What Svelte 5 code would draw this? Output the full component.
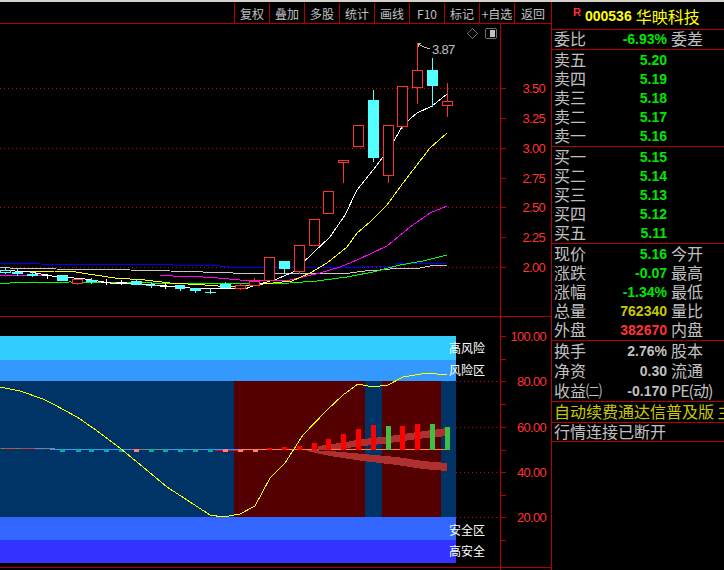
<script>
  const dots = [88, 148, 207, 267];
  const ticks = [88, 118, 148, 178, 207, 237, 267];
  const priceLabels = [[88,'3.50'],[118,'3.25'],[148,'3.00'],[178,'2.75'],[207,'2.50'],[237,'2.25'],[267,'2.00']];

  // x, width, bodyTop, bodyBottom, wickTop, wickBottom, colour kind
  const candles = [
    [0,11,270,272,267,274,'c'],[12,11,272,273,269,276,'c'],[27,11,274,275,272,277,'c'],[42,10,275,275,274,279,'w'],
    [57,11,275,281,275,281,'f'],[72,11,279,283,279,285,'r'],[86,11,280,282,278,284,'f'],[101,10,282,282,279,285,'w'],
    [116,11,282,282,280,285,'w'],[131,11,281,285,279,285,'f'],[146,11,285,285,282,288,'c'],[160,10,286,286,283,289,'w'],
    [175,10,285,289,285,291,'f'],[190,11,288,291,288,293,'f'],[205,11,292,292,288,294,'c'],[220,11,284,288,282,288,'f'],
    [235,11,285,288,283,290,'r'],[249,11,281,285,278,285,'r'],[264,11,257,280,257,280,'r'],[279,11,261,269,261,273,'f'],
    [294,11,245,271,245,274,'r'],[309,11,219,245,219,245,'r'],[323,11,191,213,191,213,'r'],[338,11,160,162,160,183,'r'],
    [353,11,125,146,125,146,'r'],[368,11,100,158,90,162,'f'],[383,11,125,175,125,183,'r'],[397,11,86,126,86,129,'r'],
    [412,11,70,87,43,104,'r'],[427,11,70,86,58,107,'f'],[442,11,101,105,83,117,'r']
  ];

  const pts = (a) => a.map((p) => p.join(',')).join(' ');
  const lines = [
    ['#0000ff', [[0,263],[40,264],[173,265],[220,266],[230,267],[363,267],[364,266],[395,266],[396,264],[447,263]]],
    ['#c8c8c8', [[0,267],[10,268],[55,268],[56,269],[130,270],[170,271],[203,272],[233,273],[350,273],[365,271],[380,270],[400,268],[420,268],[430,266],[447,265]]],
    ['#ff00ff', [[0,276],[50,275],[160,275],[173,276],[203,277],[218,278],[240,280],[290,280],[320,273],[340,267],[357,260],[387,246],[410,227],[430,213],[447,206]]],
    ['#00ff00', [[0,283],[10,283],[70,282],[230,284],[290,283],[317,281],[347,277],[373,272],[400,265],[423,261],[447,255]]],
    ['#ffff00', [[20,272],[55,271],[70,271],[88,274],[115,278],[145,280],[170,283],[205,285],[230,287],[263,284],[292,281],[310,273],[327,263],[347,247],[357,233],[370,222],[387,205],[403,183],[430,148],[447,133]]],
    ['#ffffff', [[0,270],[30,272],[52,276],[85,279],[110,283],[155,285],[190,288],[245,289],[250,287],[277,279],[293,272],[313,253],[330,237],[345,215],[357,190],[373,170],[390,148],[403,125],[417,113],[432,106],[447,94]]]
  ];

  const lowerDots = [381, 427, 472, 517];
  const lowerTicks = [336, 359, 381, 404, 427, 450, 472, 495, 517, 540];
  const lowerLabels = [[336,'100.00'],[381,'80.00'],[427,'60.00'],[472,'40.00'],[517,'20.00']];
  const zones = [
    [0,234,'#003366'],[234,131,'#550000'],[365,17,'#003366'],[382,59,'#550000'],[441,15,'#003366']
  ];
  const bands = [[336,24,'#33ccff'],[360,21,'#3399ff'],[517,23,'#3366ff'],[540,23,'#3333ff']];
  const zoneText = [[348,'高风险'],[370,'风险区'],[530,'安全区'],[551,'高安全']];
  const bars = [
    [267,448,'#ff0000'],[282,447,'#ff0000'],[297,446,'#ff0000'],[312,443,'#ff0000'],[326,439,'#ff0000'],[341,434,'#ff0000'],
    [356,429,'#ff0000'],[371,425,'#ff0000'],[386,426,'#40c040'],[400,426,'#ff0000'],[415,424,'#ff0000'],[430,424,'#40c040'],[445,427,'#40c040']
  ];
  const teal = [62,78,91,106,121,151,165,180,195,210];
  const pink = [136,225,240,255];
  // x, width, y, colour: short pieces of the flat signal line on the left
  const flat = [
    [0,1,448,'#ff0000'],[1,4,448,'#40a040'],[5,10,448,'#d04040'],[15,5,448,'#40a040'],[20,15,448,'#c04040'],[35,20,448,'#808080'],
    [35,10,449,'#0040a0'],[130,40,449,'#808080'],[190,12,449,'#808080'],[215,30,450,'#ff0000'],[245,15,449,'#ff0000']
  ];
  const osc = [[0,387],[20,391],[43,399],[53,404],[77,417],[93,428],[120,448],[143,467],[167,487],[187,500],[210,515],[223,517],[240,514],[255,506],[270,478],[285,463],[303,435],[327,410],[343,395],[358,384],[373,387],[388,385],[403,377],[427,373],[447,375]];
  const bandUp = [[318,446],[340,443],[363,439],[390,436],[417,432],[447,428],[447,436],[417,439],[390,443],[363,446],[340,449],[318,450]];
  const bandDown = [[307,450],[330,451],[363,454],[397,457],[423,461],[447,463],[447,471],[423,469],[397,465],[363,461],[330,456],[307,451]];

  const tools = ['复权','叠加','多股','统计','画线','F10','标记','+自选','返回'];

  const quote = [
    { rows: [['委比','-6.93%','委差','green']], cls: 'flush' },
    { rows: [['卖五','5.20','','green'],['卖四','5.19','','green'],['卖三','5.18','','green'],['卖二','5.17','','green'],['卖一','5.16','','green']], cls: 'pad' },
    { rows: [['买一','5.15','','green'],['买二','5.14','','green'],['买三','5.13','','green'],['买四','5.12','','green'],['买五','5.11','','green']], cls: 'pad' },
    { rows: [['现价','5.16','今开','green'],['涨跌','-0.07','最高','green'],['涨幅','-1.34%','最低','green'],['总量','762340','量比','yellow'],['外盘','382670','内盘','red']], cls: 'pad' },
    { rows: [['换手','2.76%','股本','grey'],['净资','0.30','流通','grey'],['收益㈡','-0.170','PE(动)','grey']], cls: 'tall' }
  ];
</script>

<div class="app">
  <section class="charts">
    <nav class="toolbar">
      {#each tools as t}
        <button class="tool">{t}</button>
      {/each}
    </nav>

    <svg class="price" viewBox="0 24 551 293" width="551" height="293" shape-rendering="crispEdges">
      {#each dots as y}
        <line x1="0" x2="500" y1={y + 0.5} y2={y + 0.5} class="dot" />
      {/each}
      <line x1="500.5" x2="500.5" y1="24" y2="317" class="axis" />
      {#each ticks as y}
        <line x1="500" x2="506" y1={y + 0.5} y2={y + 0.5} class="axis" />
      {/each}
      {#each priceLabels as [y, t]}
        <text x="545" y={y + 5} class="scale">{t}</text>
      {/each}
      {#each lines as [c, p]}
        <polyline points={pts(p)} fill="none" stroke={c} stroke-width="1" />
      {/each}
      {#each candles as [x, w, t, b, wt, wb, k]}
        {@const col = k === 'r' ? '#ff3232' : k === 'w' ? '#ffffff' : '#54ffff'}
        <line x1={x + Math.floor(w / 2) + 0.5} x2={x + Math.floor(w / 2) + 0.5} y1={wt} y2={wb} stroke={col} />
        {#if k === 'f'}
          <rect x={x} y={t} width={w} height={b - t} fill={col} />
        {:else if t === b}
          <line x1={x} x2={x + w} y1={t + 0.5} y2={t + 0.5} stroke={col} />
        {:else}
          <rect x={x + 0.5} y={t + 0.5} width={w - 1} height={b - t} fill="#000" stroke={col} />
        {/if}
      {/each}
      <polyline points="430,49 424,47 418,44 421,43" fill="none" stroke="#c0c0c0" />
      <line x1="418.5" x2="418.5" y1="44" y2="47" stroke="#c0c0c0" />
      <text x="432" y="54" class="peak">3.87</text>
      <path d="M472.5 28.5 L477.5 33.5 L472.5 38.5 L467.5 33.5 Z" fill="none" stroke="#707070" />
      <rect x="485.5" y="28.5" width="11" height="10" rx="2" fill="none" stroke="#707070" />
      <rect x="490" y="30" width="5" height="7" fill="#c0c0c0" />
      <line x1="0" x2="551" y1="316.5" y2="316.5" class="axis" />
    </svg>

    <svg class="lower" viewBox="0 317 551 253" width="551" height="253" shape-rendering="crispEdges">
      {#each lowerDots as y}
        <line x1="456" x2="500" y1={y + 0.5} y2={y + 0.5} class="dot" />
      {/each}
      {#each zones as [x, w, c]}
        <rect x={x} y="381" width={w} height="136" fill={c} />
      {/each}
      {#each bands as [y, h, c]}
        <rect x="0" y={y} width="456" height={h} fill={c} />
      {/each}
      <line x1="50" x2="260" y1="449.5" y2="449.5" stroke="#3399ff" />
      {#each flat as [x, w, y, c]}
        <rect x={x} y={y} width={w} height="1" fill={c} />
      {/each}
      <line x1="240" x2="445" y1="449.5" y2="449.5" stroke="#ff8040" />
      {#each teal as x}
        <rect x={x - 2} y="449" width="5" height="3" fill="#00b0b0" />
      {/each}
      {#each pink as x}
        <rect x={x - 2} y="449" width="5" height="3" fill="#ff8080" />
      {/each}
      <polygon points={pts(bandUp)} fill="#b03030" />
      <polygon points={pts(bandDown)} fill="#b03030" />
      {#each bars as [x, t, c]}
        <rect x={x} y={t} width="5" height={450 - t} fill={c} />
      {/each}
      <polyline points={pts(osc)} fill="none" stroke="#ffff00" />
      {#each zoneText as [y, t]}
        <text x="449" y={y + 5} class="zone">{t}</text>
      {/each}
      <line x1="500.5" x2="500.5" y1="317" y2="570" class="axis" />
      {#each lowerTicks as y}
        <line x1="500" x2="506" y1={y + 0.5} y2={y + 0.5} class="axis" />
      {/each}
      {#each lowerLabels as [y, t]}
        <text x="546" y={y + 5} class="scale">{t}</text>
      {/each}
      <line x1="0" x2="551" y1="567.5" y2="567.5" class="axis" />
    </svg>
  </section>

  <aside class="panel">
    <header class="title">
      <span class="r">R</span><b class="code">000536</b><span class="name">华映科技</span>
    </header>
    {#each quote as group}
      <div class="group {group.cls}">
        {#each group.rows as [a, v, b, tone]}
          <div class="row">
            <span class="label">{a}</span>
            <b class="value {tone}">{v}</b>
            <span class="label side" class:pe={b.startsWith('PE')}>{b}</span>
          </div>
        {/each}
      </div>
    {/each}
    <div class="line notice">自动续费通达信普及版 主</div>
    <div class="line status">行情连接已断开</div>
  </aside>
</div>

<style>
  :global(body) {
    margin: 0;
    background: #000;
  }
  .app {
    width: 724px;
    height: 570px;
    display: flex;
    overflow: hidden;
    background: #000;
    border-top: 2px solid #d4d0c8;
    box-sizing: border-box;
    font-family: "Liberation Sans", "Noto Sans CJK SC", sans-serif;
  }
  .charts {
    width: 551px;
    flex: none;
    display: flex;
    flex-direction: column;
  }
  .toolbar {
    height: 22px;
    flex: none;
    padding-top: 1px;
    box-sizing: border-box;
    display: flex;
    justify-content: flex-end;
    border-bottom: 1px solid #b40000;
  }
  .tool {
    width: 35px;
    padding: 0;
    background: none;
    border: 0;
    border-left: 1px solid #b40000;
    color: #c0c0c0;
    font: 12px "Noto Sans CJK SC", sans-serif;
    box-sizing: border-box;
    white-space: nowrap;
  }
  .tool:last-child {
    width: 37px;
  }
  svg {
    display: block;
    flex: none;
  }
  .dot {
    stroke: #e00000;
    stroke-dasharray: 1 3;
  }
  .axis {
    stroke: #b40000;
  }
  .scale {
    fill: #ff3232;
    font: 13px "Liberation Sans", sans-serif;
    letter-spacing: -0.7px;
    text-anchor: end;
  }
  .peak {
    fill: #c0c0c0;
    font: 13px "Liberation Sans", sans-serif;
    letter-spacing: -0.7px;
  }
  .zone {
    fill: #fff;
    font: 12px "Noto Sans CJK SC", sans-serif;
  }
  .panel {
    flex: 1;
    min-width: 0;
    border-left: 1px solid #b40000;
    color: #c0c0c0;
    font: 16px "Noto Sans CJK SC", sans-serif;
  }
  .title {
    height: 28px;
    display: flex;
    align-items: center;
    box-sizing: border-box;
    padding-left: 21px;
    color: #ffff00;
    border-bottom: 1px solid #b40000;
  }
  .r {
    color: #ff3232;
    font: bold 11px "Liberation Sans", sans-serif;
    margin: -8px 4px 0 0;
  }
  .code {
    font: bold 14px "Liberation Sans", sans-serif;
    margin-right: 4px;
  }
  .group {
    border-bottom: 1px solid #b40000;
  }
  .pad {
    padding-top: 1px;
  }
  .row {
    height: 19px;
    display: grid;
    grid-template-columns: 50px 65px auto;
    align-items: start;
    line-height: 19px;
  }
  .tall .row {
    height: 20px;
    line-height: 20px;
  }
  .label {
    padding-left: 2px;
    line-height: 17px;
    white-space: nowrap;
  }
  .tall .label {
    line-height: 18px;
  }
  .value {
    text-align: right;
    font: bold 14px/19px "Liberation Sans", sans-serif;
    white-space: nowrap;
  }
  .tall .value {
    line-height: 20px;
  }
  .side {
    padding-left: 4px;
  }
  .pe {
    letter-spacing: -1px;
  }
  .green { color: #00e600; }
  .yellow { color: #c8c800; }
  .red { color: #ff3232; }
  .grey { color: #c0c0c0; }
  .line {
    white-space: nowrap;
    padding-left: 2px;
    border-bottom: 1px solid #b40000;
  }
  .notice {
    height: 20px;
    line-height: 18px;
    color: #c8c800;
  }
  .status {
    height: 18px;
    line-height: 16px;
  }
</style>
